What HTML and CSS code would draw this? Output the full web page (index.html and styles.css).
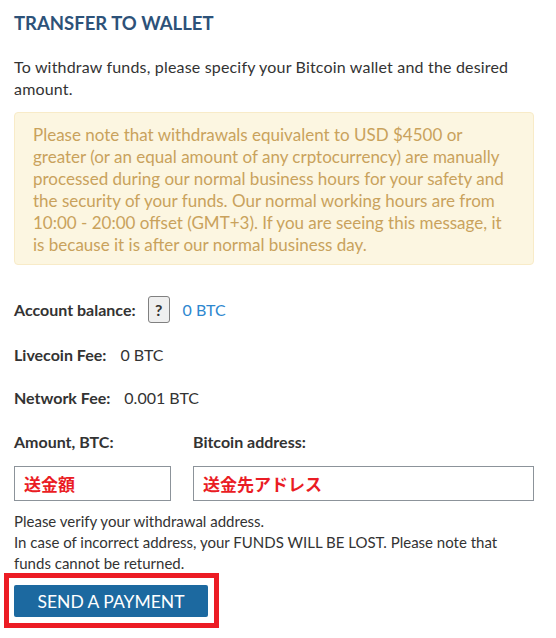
FILE: index.html
```html
<!DOCTYPE html>
<html>
<head>
<meta charset="utf-8">
<link rel="stylesheet" href="styles.css">
</head>
<body>
<div class="page">
  <h2 class="title">TRANSFER TO WALLET</h2>
  <p class="intro">To withdraw funds, please specify your Bitcoin wallet and the desired amount.</p>
  <div class="alert">Please note that withdrawals equivalent to USD $4500 or greater (or an equal amount of any crptocurrency) are manually processed during our normal business hours for your safety and the security of your funds. Our normal working hours are from 10:00 - 20:00 offset (GMT+3). If you are seeing this message, it is because it is after our normal business day.</div>
  <div class="row row-balance">
    <span class="label">Account balance:</span>
    <span class="help">?</span>
    <span class="link">0 BTC</span>
  </div>
  <div class="row">
    <span class="label">Livecoin Fee:</span>
    <span class="value">0 BTC</span>
  </div>
  <div class="row">
    <span class="label">Network Fee:</span>
    <span class="value">0.001 BTC</span>
  </div>
  <div class="fields">
    <div class="field">
      <span class="label">Amount, BTC:</span>
      <div class="input">送金額</div>
    </div>
    <div class="field">
      <span class="label">Bitcoin address:</span>
      <div class="input">送金先アドレス</div>
    </div>
  </div>
  <p class="note">Please verify your withdrawal address.<br>In case of incorrect address, your FUNDS WILL BE LOST. Please note that funds cannot be returned.</p>
  <div class="highlight">
    <button class="send">SEND A PAYMENT</button>
  </div>
</div>
</body>
</html>
```
FILE: styles.css
```css
html, body {
  margin: 0;
  padding: 0;
  background: #ffffff;
}
.page {
  width: 520px;
  padding: 0 22px 0 14px;
  font-family: Lato, "Noto Sans", sans-serif;
  color: #333333;
}
.title {
  margin: 0;
  padding-top: 13px;
  font-size: 18.5px;
  line-height: 20px;
  font-weight: 700;
  color: #2d5279;
}
.intro {
  margin: 23px 0 0;
  font-size: 16px;
  line-height: 22px;
  letter-spacing: 0.18px;
}
.alert {
  margin-top: 12px;
  padding: 11px 18px 8px 18px;
  background: #fcf6e1;
  border: 1px solid #f8ebc8;
  border-radius: 4px;
  color: #c9a25c;
  font-size: 17px;
  line-height: 22px;
}
.row {
  display: flex;
  align-items: center;
  gap: 14px;
  margin-top: 21px;
  font-size: 16px;
  line-height: 22px;
}
.row-balance {
  margin-top: 31px;
  height: 27px;
  gap: 12px;
}
.label {
  font-weight: 700;
  color: #333333;
}
.help {
  box-sizing: border-box;
  width: 22px;
  height: 27px;
  display: flex;
  align-items: center;
  justify-content: center;
  border: 1px solid #808080;
  border-radius: 3px;
  background: #efefef;
  font-weight: 700;
  font-size: 16px;
  color: #333333;
  margin-right: 1px;
}
.link {
  color: #2d87cf;
}
.fields {
  display: grid;
  grid-template-columns: 157px 341px;
  gap: 22px;
  margin-top: 22px;
}
.field {
  display: flex;
  flex-direction: column;
  gap: 13px;
  font-size: 16px;
  line-height: 22px;
}
.input {
  box-sizing: border-box;
  height: 35px;
  border: 1px solid #8c939a;
  padding: 0 9px;
  display: flex;
  align-items: center;
  font-family: "Noto Sans CJK JP", sans-serif;
  font-weight: 700;
  font-size: 17px;
  color: #ea1c24;
}
.note {
  margin: 10px 0 0;
  font-size: 15px;
  line-height: 21px;
  color: #333333;
}
.highlight {
  display: inline-block;
  margin: -1px 0 0 -10px;
  padding: 7px 6px 6px 5px;
  border: 5px solid #ec1c24;
}
.send {
  display: block;
  width: 194px;
  height: 32px;
  border: none;
  border-radius: 2px;
  background: #1c69a0;
  color: #ffffff;
  font-family: Lato, "Noto Sans", sans-serif;
  font-size: 17.5px;
  padding: 0;
  cursor: pointer;
}
```
